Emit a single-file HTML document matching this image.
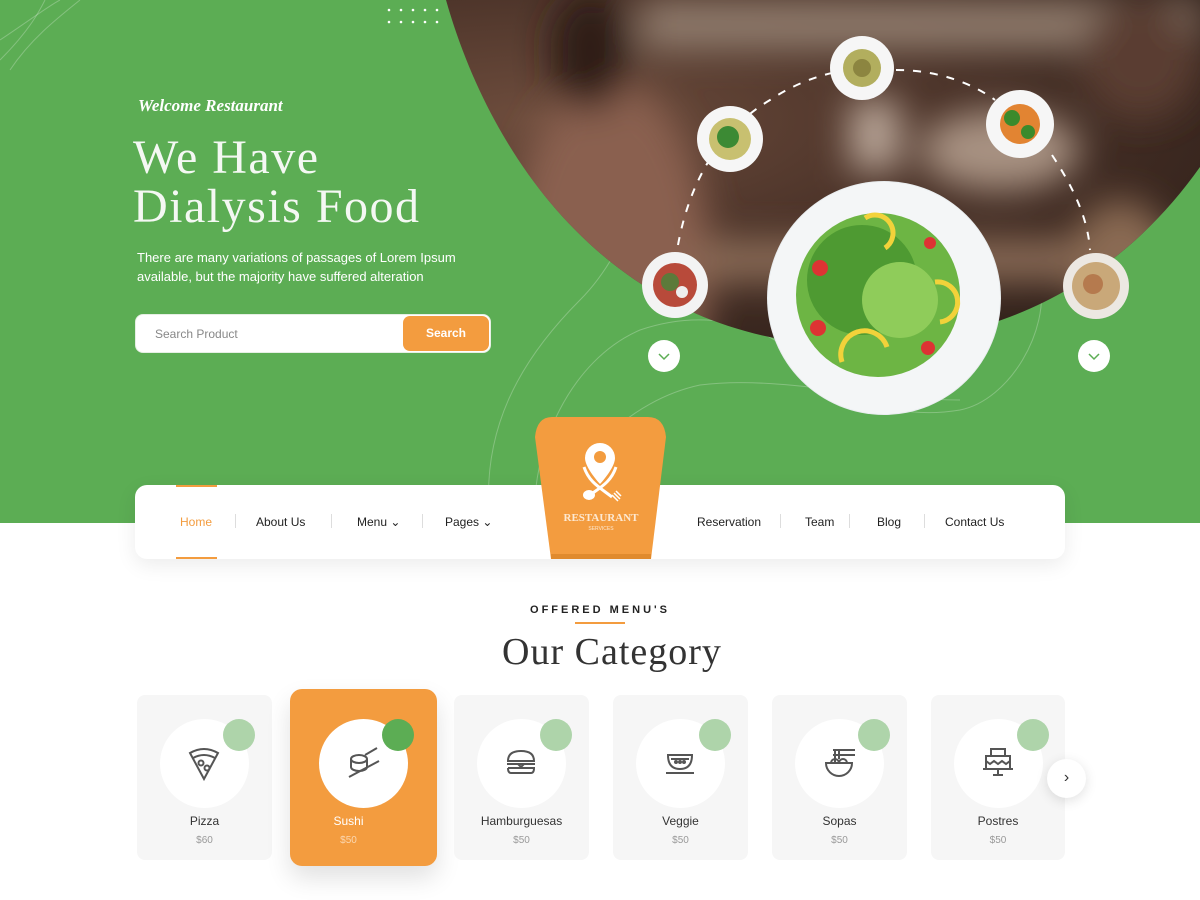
<!DOCTYPE html>
<html><head><meta charset="utf-8"><style>
*{margin:0;padding:0;box-sizing:border-box}
body{width:1200px;height:900px;position:relative;overflow:hidden;background:#fff;font-family:"Liberation Sans",sans-serif}
.hero{position:absolute;left:0;top:0;width:1200px;height:523px;background:#5cad54;overflow:hidden}
.abs{position:absolute}
.nav{position:absolute;left:135px;top:485px;width:930px;height:74px;background:#fff;border-radius:12px;box-shadow:0 6px 20px rgba(0,0,0,.08)}
.nav span{position:absolute;top:30px;font-size:12px;color:#222}
.sep{position:absolute;top:29px;width:1px;height:14px;background:#ddd}
.card{position:absolute;top:695px;width:135px;height:165px;background:#f6f6f6;border-radius:8px}
.card .c{position:absolute;left:23px;top:24px;width:89px;height:89px;border-radius:50%;background:#fff}
.card .g{position:absolute;left:86px;top:24px;width:32px;height:32px;border-radius:50%;background:#aed4aa}
.card .n{position:absolute;top:119px;width:100%;text-align:center;font-size:12px;color:#333}
.card .p{position:absolute;top:140px;width:100%;text-align:center;font-size:10px;color:#999}
.card svg{position:absolute;left:49px;top:50px}
</style></head><body>
<div class="hero">
<svg class="abs" style="left:0;top:0" width="1200" height="523">
<defs>
<radialGradient id="bg" cx="0.45" cy="0.3" r="0.7">
<stop offset="0" stop-color="#6e4d3d"/><stop offset="0.5" stop-color="#4a3228"/><stop offset="1" stop-color="#2e1f19"/></radialGradient>
<clipPath id="cp"><path d="M446,0 C500,190 640,345 850,345 C1000,345 1120,280 1200,167 L1200,0 Z"/></clipPath>
<filter id="bl"><feGaussianBlur stdDeviation="18"/></filter>
</defs>
<g fill="none" stroke="rgba(255,255,255,.25)" stroke-width="1">
<path d="M0,40 C30,20 50,5 60,0"/><path d="M0,60 C30,30 40,10 45,0"/><path d="M10,70 C30,40 55,20 80,0"/>
<path d="M490,523 C480,430 520,360 580,300 C620,260 640,200 650,160"/>
<path d="M535,523 C530,450 570,360 640,330 C700,310 760,320 800,360 C840,400 900,420 960,410 C1010,400 1050,330 1040,280"/>
<path d="M555,523 C570,460 630,400 700,385 C780,375 870,400 960,400"/>
</g>
<g clip-path="url(#cp)">
<rect width="1200" height="400" fill="url(#bg)"/>
<g filter="url(#bl)">
<rect x="640" y="0" width="560" height="50" fill="#8f7a6c"/>
<ellipse cx="610" cy="270" rx="100" ry="190" fill="#8a6050"/>
<ellipse cx="590" cy="50" rx="40" ry="60" fill="#2e1f19"/>
<rect x="700" y="240" width="500" height="40" fill="#8c6d58"/>
<ellipse cx="1000" cy="150" rx="80" ry="40" fill="#a89282"/>
<ellipse cx="1140" cy="60" rx="60" ry="60" fill="#5a3e30"/>
<rect x="850" y="100" width="50" height="70" fill="#b9a698"/>
<ellipse cx="1120" cy="260" rx="50" ry="60" fill="#8a6a52"/>
</g>
</g>
<g fill="#fff"><circle cx="389" cy="10" r="1.3"/><circle cx="401" cy="10" r="1.3"/><circle cx="413" cy="10" r="1.3"/><circle cx="425" cy="10" r="1.3"/><circle cx="437" cy="10" r="1.3"/><circle cx="389" cy="22" r="1.3"/><circle cx="401" cy="22" r="1.3"/><circle cx="413" cy="22" r="1.3"/><circle cx="425" cy="22" r="1.3"/><circle cx="437" cy="22" r="1.3"/></g>
<path d="M678,245 C690,180 720,130 770,100 C800,80 830,72 850,70 M896,70 C940,70 975,85 995,100 M1052,155 C1075,190 1088,220 1090,250" fill="none" stroke="#fff" stroke-width="2" stroke-dasharray="8,9"/>
<circle cx="884" cy="298" r="117" fill="#e9edef"/>
<circle cx="884" cy="298" r="116" fill="#f4f6f7"/>
<circle cx="878" cy="295" r="82" fill="#6db544"/>
<circle cx="862" cy="280" r="55" fill="#4e9a32"/>
<circle cx="900" cy="300" r="38" fill="#8fcc5a"/>
<circle cx="820" cy="268" r="8" fill="#d33"/><circle cx="818" cy="328" r="8" fill="#d33"/><circle cx="928" cy="348" r="7" fill="#d33"/><circle cx="930" cy="243" r="6" fill="#d33"/>
<path d="M865,218 a18,18 0 0 1 20,30" stroke="#f2d23a" stroke-width="5" fill="none"/>
<path d="M935,282 a18,18 0 0 1 5,40" stroke="#f2d23a" stroke-width="5" fill="none"/>
<path d="M842,362 a18,18 0 0 1 45,-15" stroke="#f2d23a" stroke-width="5" fill="none"/>
<g>
<circle cx="675" cy="285" r="33" fill="#f3f3f3"/><circle cx="675" cy="285" r="22" fill="#b84a3a"/><circle cx="670" cy="282" r="9" fill="#5c7a3a"/><circle cx="682" cy="292" r="6" fill="#eee"/>
<circle cx="730" cy="139" r="33" fill="#f6f6f6"/><circle cx="730" cy="139" r="21" fill="#c8c070"/><circle cx="728" cy="137" r="11" fill="#3c8a34"/>
<circle cx="862" cy="68" r="32" fill="#f6f6f6"/><circle cx="862" cy="68" r="19" fill="#b2ae5e"/><circle cx="862" cy="68" r="9" fill="#8c8540"/>
<circle cx="1020" cy="124" r="34" fill="#f6f6f6"/><circle cx="1020" cy="124" r="20" fill="#e28432"/><circle cx="1012" cy="118" r="8" fill="#3b8a2c"/><circle cx="1028" cy="132" r="7" fill="#3b8a2c"/>
<circle cx="1096" cy="286" r="33" fill="#ece8e2"/><circle cx="1096" cy="286" r="24" fill="#c9a879"/><circle cx="1093" cy="284" r="10" fill="#b57a4e"/>
</g>
<circle cx="664" cy="356" r="16" fill="#fff"/><path d="M659,354 l5,5 5,-5" stroke="#5cad54" stroke-width="1.5" fill="none"/>
<circle cx="1094" cy="356" r="16" fill="#fff"/><path d="M1089,354 l5,5 5,-5" stroke="#5cad54" stroke-width="1.5" fill="none"/>
</svg>
<div class="abs" style="left:138px;top:96px;color:#fff;font:italic bold 17px 'Liberation Serif',serif">Welcome Restaurant</div>
<div class="abs" style="left:133px;top:133px;color:#f4f8f3;font:48px/49px 'Liberation Serif',serif;letter-spacing:1.5px">We Have<br>Dialysis Food</div>
<div class="abs" style="left:137px;top:248px;color:#fff;font-size:13px;line-height:19px">There are many variations of passages of Lorem Ipsum<br>available, but the majority have suffered alteration</div>
<div class="abs" style="left:135px;top:314px;width:356px;height:39px;background:#fff;border-radius:8px;border:1px solid #e6efe4">
<span class="abs" style="left:19px;top:12px;font-size:12px;color:#888">Search Product</span>
<div class="abs" style="left:267px;top:1px;width:86px;height:35px;background:#f39c3f;border-radius:7px;color:#fff;font-size:12px;font-weight:bold;text-align:center;line-height:35px">Search</div>
</div>
</div>
<div class="nav">
<div class="abs" style="left:41px;top:0;width:41px;height:2px;background:#f39c3f"></div>
<div class="abs" style="left:41px;bottom:0;width:41px;height:2px;background:#f39c3f"></div>
<span style="left:45px;color:#f39c3f">Home</span><div class="sep" style="left:100px"></div>
<span style="left:121px">About Us</span><div class="sep" style="left:196px"></div>
<span style="left:222px">Menu ⌄</span><div class="sep" style="left:287px"></div>
<span style="left:310px">Pages ⌄</span>
<span style="left:562px">Reservation</span><div class="sep" style="left:645px"></div>
<span style="left:670px">Team</span><div class="sep" style="left:714px"></div>
<span style="left:742px">Blog</span><div class="sep" style="left:789px"></div>
<span style="left:810px">Contact Us</span>
</div>
<svg class="abs" style="left:534px;top:417px" width="134" height="144">
<path d="M18,0 H114 Q130,0 132,20 L117,142 H17 L1,20 Q3,0 18,0 Z" fill="#f39c3f"/>
<rect x="17" y="137" width="100" height="5" fill="#e08a2d"/>
<path d="M66,26 a15,15 0 0 1 15,15 c0,10 -15,26 -15,26 c0,0 -15,-16 -15,-26 a15,15 0 0 1 15,-15z" fill="#fff"/>
<circle cx="66" cy="40" r="6" fill="#f39c3f"/>
<path d="M50,50 C55,65 65,70 78,80 M82,50 C77,65 67,70 56,78" stroke="#fff" stroke-width="3" fill="none"/>
<ellipse cx="55" cy="78" rx="6" ry="5" fill="#fff"/>
<path d="M78,78 l6,6 M80,76 l6,6 M82,74 l5,5" stroke="#fff" stroke-width="1.5"/>
<text x="67" y="104" text-anchor="middle" font-family="Liberation Serif" font-size="11" fill="#fde9d2" font-weight="bold">RESTAURANT</text>
<text x="67" y="113" text-anchor="middle" font-family="Liberation Sans" font-size="5" fill="#fde9d2">SERVICES</text>
</svg>
<div class="abs" style="left:0;top:604px;width:1200px;text-align:center;font-size:11px;font-weight:bold;letter-spacing:3px;color:#222">OFFERED MENU'S</div>
<div class="abs" style="left:575px;top:622px;width:50px;height:2px;background:#f39c3f"></div>
<div class="abs" style="left:12px;top:630px;width:1200px;text-align:center;font:38px 'Liberation Serif',serif;color:#333;letter-spacing:1px">Our Category</div>

<div class="card" style="left:137px"><div class="c"></div><div class="g"></div>
<svg width="36" height="36" viewBox="0 0 36 36" fill="none" stroke="#555" stroke-width="2"><path d="M4,8 Q18,0 32,8 L18,34 Z M7,13 Q18,7 29,13"/><circle cx="15" cy="18" r="2.5"/><circle cx="21" cy="23" r="2.5"/></svg>
<div class="n">Pizza</div><div class="p">$60</div></div>

<div class="card" style="left:290px;top:689px;width:147px;height:177px;background:#f39c3f;border-radius:12px;box-shadow:0 12px 25px rgba(0,0,0,.12)">
<div class="c" style="left:29px;top:30px"></div><div class="g" style="left:92px;top:30px;background:#5cad54"></div>
<svg style="left:55px;top:56px" width="36" height="36" viewBox="0 0 36 36" fill="none" stroke="#555" stroke-width="2"><ellipse cx="14" cy="14" rx="8" ry="4"/><path d="M6,14 v8 a8,4 0 0 0 16,0 v-8"/><path d="M20,10 L32,3 M4,32 L34,16"/></svg>
<div class="n" style="top:125px;left:-15px;color:#fff">Sushi</div><div class="p" style="top:146px;left:-15px;color:#fbd7b0">$50</div></div>

<div class="card" style="left:454px"><div class="c"></div><div class="g"></div>
<svg width="36" height="36" viewBox="0 0 36 36" fill="none" stroke="#555" stroke-width="2"><path d="M5,16 Q5,6 18,6 Q31,6 31,16 Z M4,19 H32 M5,23 H31 Q31,28 28,28 H8 Q5,28 5,23"/><path d="M15,19 l3,3 3,-3" /></svg>
<div class="n">Hamburguesas</div><div class="p">$50</div></div>

<div class="card" style="left:613px"><div class="c"></div><div class="g"></div>
<svg width="36" height="36" viewBox="0 0 36 36" fill="none" stroke="#555" stroke-width="2"><path d="M6,10 H30 Q30,24 18,24 Q6,24 6,10 Z M9,14 H27 M4,28 H32"/><circle cx="14" cy="17" r="1" fill="#555"/><circle cx="18" cy="17" r="1" fill="#555"/><circle cx="22" cy="17" r="1" fill="#555"/></svg>
<div class="n">Veggie</div><div class="p">$50</div></div>

<div class="card" style="left:772px"><div class="c"></div><div class="g"></div>
<svg width="36" height="36" viewBox="0 0 36 36" fill="none" stroke="#555" stroke-width="2"><path d="M5,18 a13,13 0 0 0 26,0 Z M10,18 a4,4 0 0 1 8,0 a4,4 0 0 1 8,0 M14,18 V4 M18,14 V4 M12,5 H34 M12,10 H34"/></svg>
<div class="n">Sopas</div><div class="p">$50</div></div>

<div class="card" style="left:931px;width:134px"><div class="c"></div><div class="g"></div>
<svg width="36" height="36" viewBox="0 0 36 36" fill="none" stroke="#555" stroke-width="2"><rect x="11" y="4" width="14" height="7"/><rect x="6" y="11" width="24" height="13"/><path d="M6,16 l4,3 4,-3 4,3 4,-3 4,3 4,-3 M3,24 H33 M18,24 v6 M13,30 H23"/></svg>
<div class="n">Postres</div><div class="p">$50</div></div>

<div class="abs" style="left:1047px;top:759px;width:39px;height:39px;border-radius:50%;background:#fff;box-shadow:0 3px 12px rgba(0,0,0,.12);text-align:center;line-height:38px;font-size:16px;color:#333">›</div>
</body></html>
